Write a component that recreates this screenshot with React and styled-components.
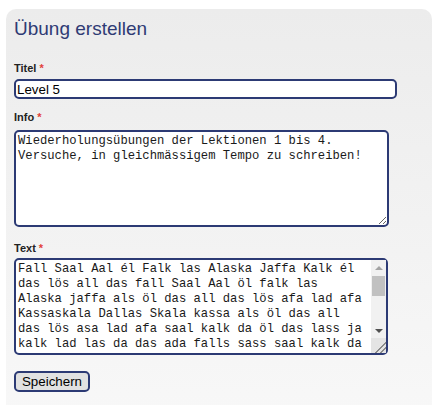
import styled, { createGlobalStyle } from "styled-components";

const GlobalStyle = createGlobalStyle`
  body {
    margin: 0;
    background: #fff;
    font-family: "Liberation Sans", Arial, sans-serif;
  }
`;

const Panel = styled.div`
  margin: 9px 0 0 6px;
  width: 426px;
  height: 420px;
  box-sizing: border-box;
  padding: 9px 8px 0 8px;
  border-radius: 10px 10px 0 0;
  background: linear-gradient(#ececec, #f8f8f8);
`;

const Title = styled.h2`
  margin: 0 0 22px 0;
  font-size: 19px;
  line-height: 22px;
  font-weight: normal;
  color: #2f3b74;
`;

const Label = styled.label`
  display: block;
  font-size: 11px;
  line-height: 13px;
  font-weight: bold;
  color: #222;
  margin-bottom: ${(p) => p.gap || 4}px;
`;

const Star = styled.span`
  color: #e2403a;
`;

const Input = styled.input`
  display: block;
  box-sizing: border-box;
  width: 383px;
  height: 20px;
  margin: 0 0 12px 0;
  padding: 0 1px;
  border: 2px solid #2c3a74;
  border-radius: 5px;
  background: #fff;
  font-family: "Liberation Sans", Arial, sans-serif;
  font-size: 13.33px;
  color: #000;
  outline: none;
`;

const AreaWrap = styled.div`
  position: relative;
  width: ${(p) => p.w}px;
  margin: 0 0 ${(p) => p.mb}px 0;
`;

const Area = styled.textarea`
  display: block;
  box-sizing: border-box;
  width: 100%;
  height: 97px;
  margin: 0;
  padding: 2px ${(p) => (p.scroll ? 17 : 2)}px 2px 2px;
  border: 2px solid #2c3a74;
  border-radius: 5px;
  background: #fff;
  font-family: "Liberation Mono", "DejaVu Sans Mono", monospace;
  font-size: 12.2px;
  line-height: 15px;
  color: #1a1a1a;
  outline: none;
  overflow: hidden;
`;

/* drawn scrollbar lying over the textarea's right edge */
const Scrollbar = styled.div`
  position: absolute;
  top: 2px;
  right: 2px;
  bottom: 2px;
  width: 15px;
  display: flex;
  flex-direction: column;
  background: #f1f1f1;
  pointer-events: none;
`;

const ArrowButton = styled.div`
  height: 15px;
  display: flex;
  align-items: center;
  justify-content: center;

  &::before {
    content: "";
    border-left: 4px solid transparent;
    border-right: 4px solid transparent;
    ${(p) =>
      p.down
        ? "border-top: 4px solid #505050;"
        : "border-bottom: 4px solid #a3a3a3;"}
  }
`;

const Thumb = styled.div`
  height: 20px;
  margin: 1px 1px 0 1px;
  background: #c1c1c1;
`;

const Track = styled.div`
  flex: 1;
`;

const Corner = styled.div`
  height: 15px;
  background:
    linear-gradient(
      135deg,
      transparent 62%,
      #8a8a8a 62% 67%,
      transparent 67% 79%,
      #8a8a8a 79% 84%,
      transparent 84%
    ),
    #e4e4e4;
`;

const Button = styled.button`
  display: block;
  box-sizing: border-box;
  width: 76px;
  height: 21px;
  padding: 0;
  border: 2px solid #2c3a74;
  border-radius: 5px;
  background: #e1e1e1;
  font-family: "Liberation Sans", Arial, sans-serif;
  font-size: 13.33px;
  color: #000;
`;

const infoText =
  "Wiederholungsübungen der Lektionen 1 bis 4.\nVersuche, in gleichmässigem Tempo zu schreiben!";

const exerciseText = [
  "Fall Saal Aal él Falk las Alaska Jaffa Kalk él",
  "das lös all das fall Saal Aal öl falk las",
  "Alaska jaffa als öl das all das lös afa lad afa",
  "Kassaskala Dallas Skala kassa als öl das all",
  "das lös asa lad afa saal kalk da öl das lass ja",
  "kalk lad las da das ada falls sass saal kalk da",
  "öl das all Jaffa Kalk Falk las Alaska das lös",
  "all das fall Saal Aal öl falk las Kassaskala",
  "Dallas Skala kassa als öl das all das lös asa",
  "lad afa saal kalk da öl das lass ja kalk lad",
  "las da das ada falls sass saal kalk da öl das",
  "all Jaffa Kalk Falk las Alaska das lös all das",
].join("\n");

const App = () => {
  return (
    <>
      <GlobalStyle />
      <Panel>
        <Title>Übung erstellen</Title>
        <Label>
          Titel <Star>*</Star>
        </Label>
        <Input defaultValue="Level 5" />
        <Label gap={6}>
          Info <Star>*</Star>
        </Label>
        <AreaWrap w={375} mb={15}>
          <Area defaultValue={infoText} />
        </AreaWrap>
        <Label gap={3}>
          Text <Star>*</Star>
        </Label>
        <AreaWrap w={374} mb={16}>
          <Area scroll defaultValue={exerciseText} />
          <Scrollbar>
            <ArrowButton />
            <Thumb />
            <Track />
            <ArrowButton down />
            <Corner />
          </Scrollbar>
        </AreaWrap>
        <Button>Speichern</Button>
      </Panel>
    </>
  );
};

export default App;
